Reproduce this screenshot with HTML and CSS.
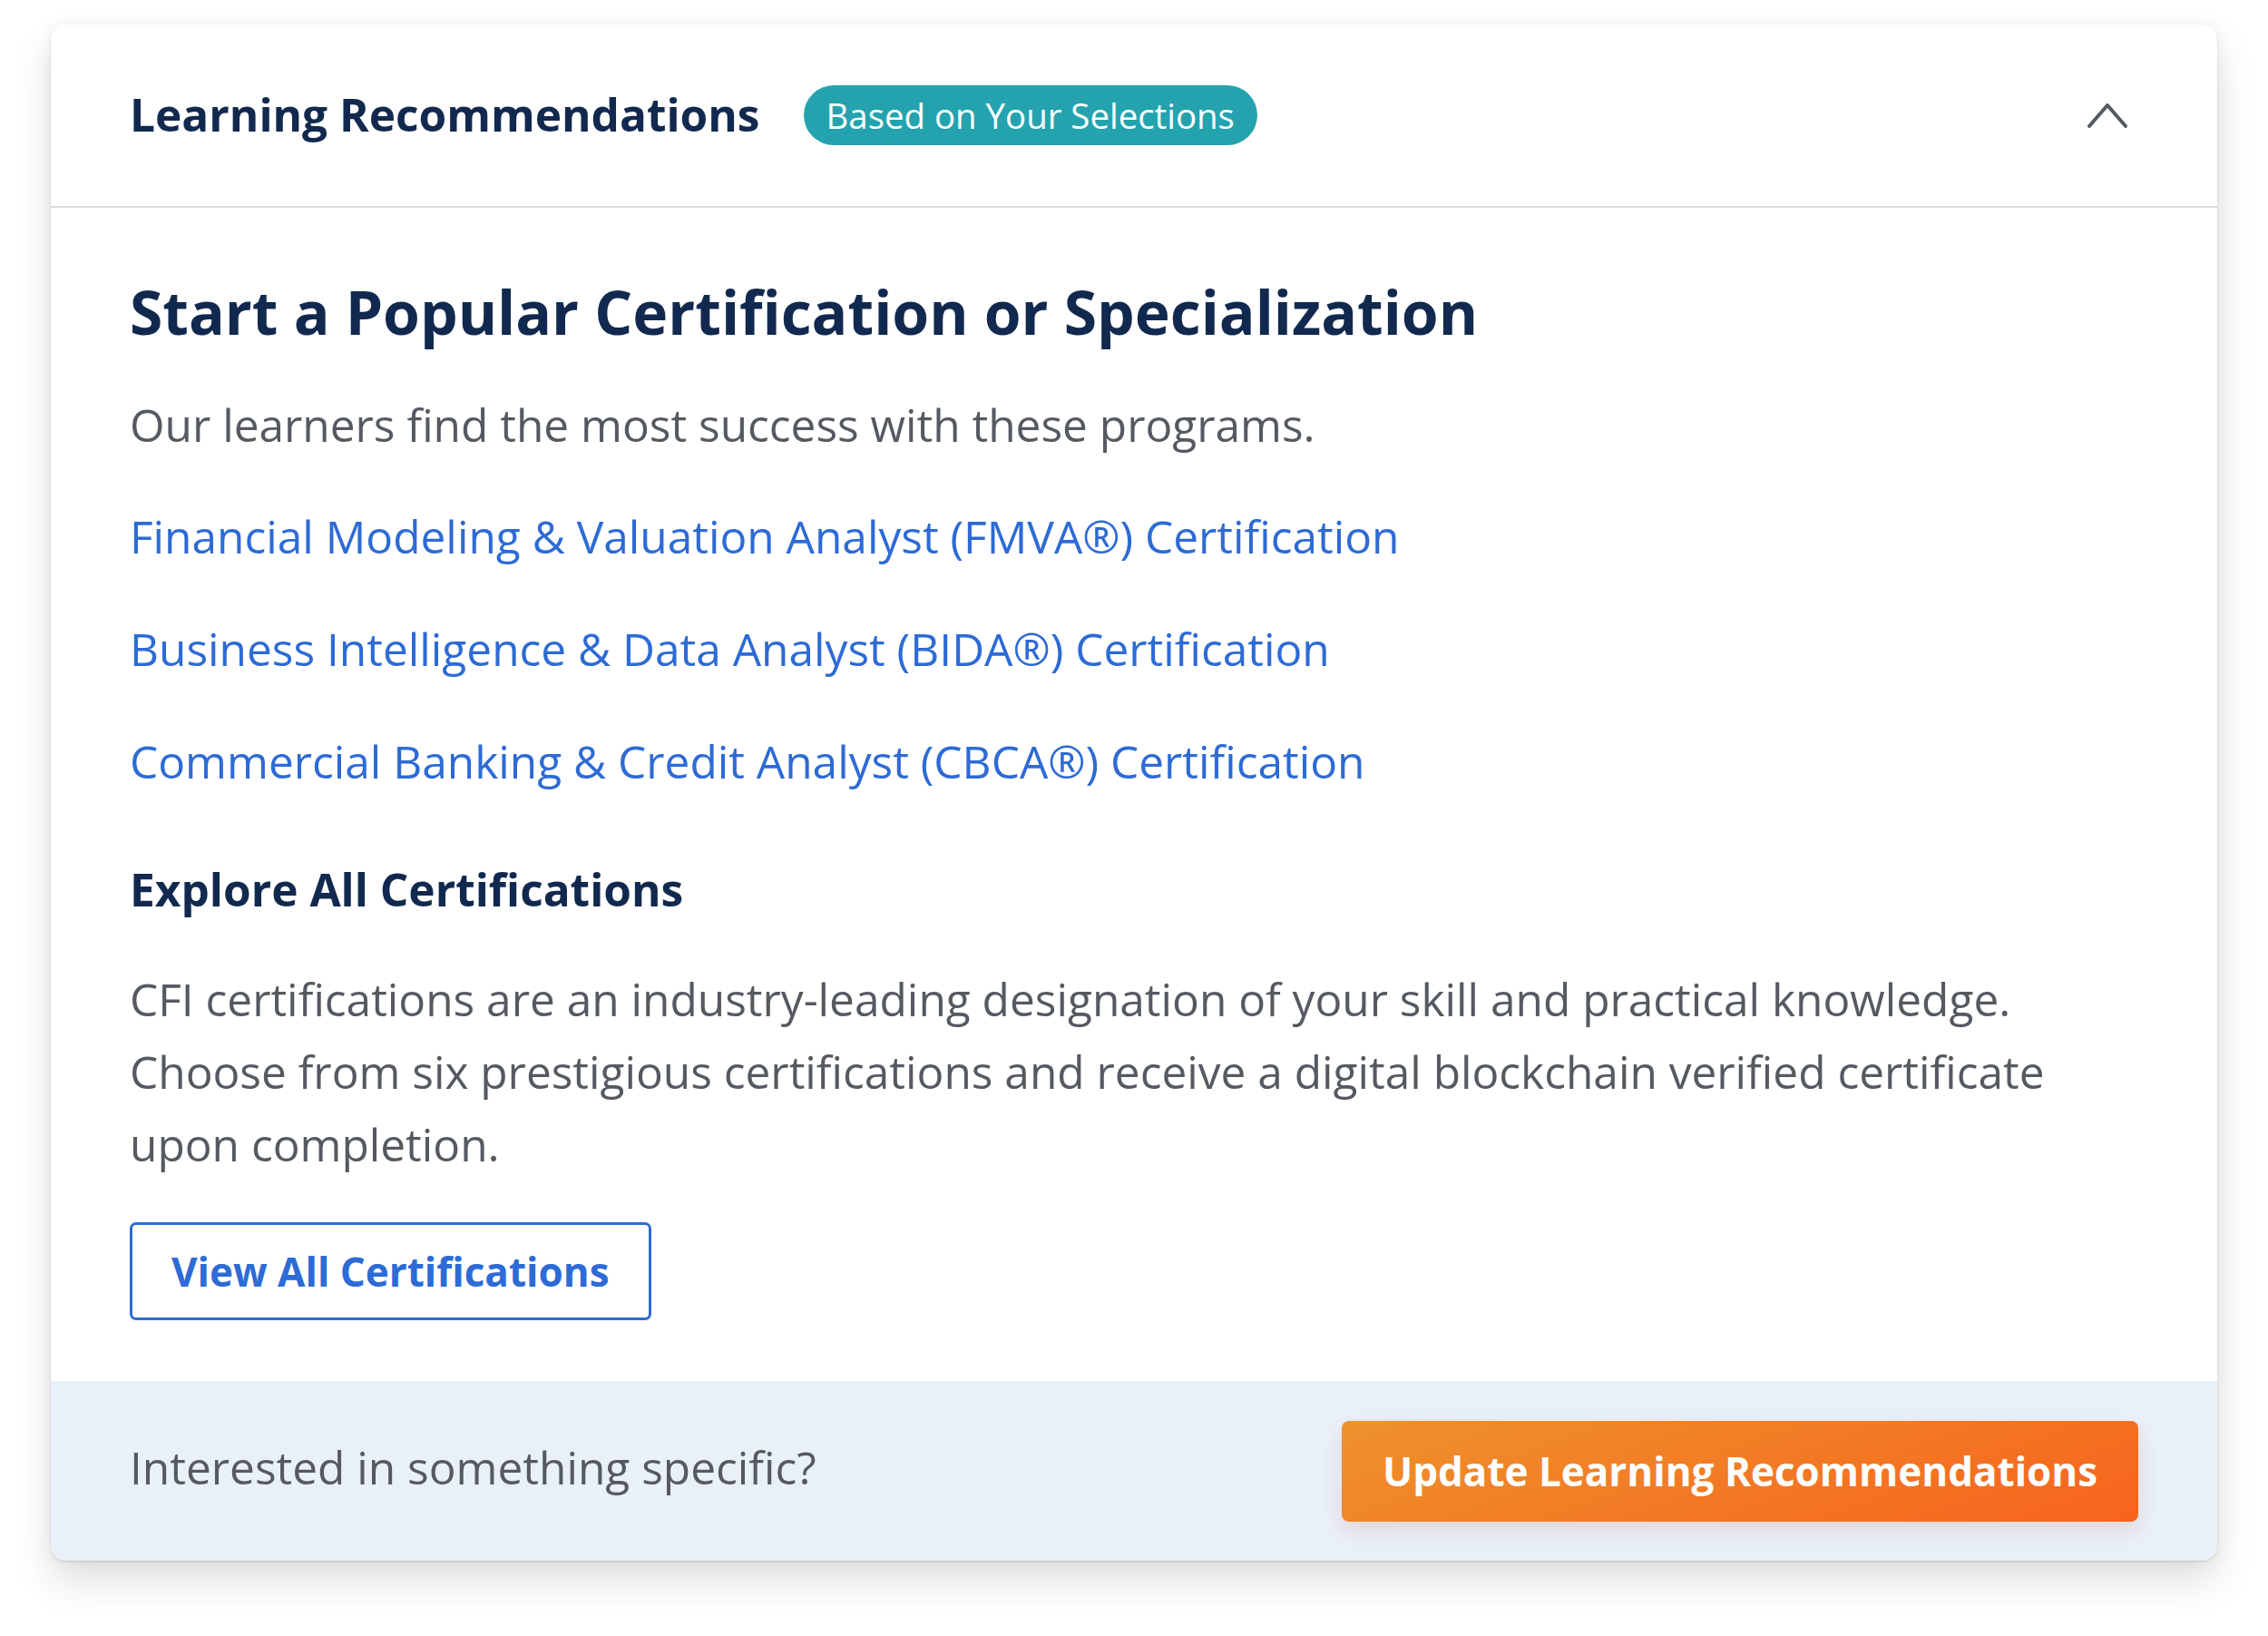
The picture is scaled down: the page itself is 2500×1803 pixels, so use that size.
FILE: index.html
```html
<!DOCTYPE html>
<html lang="en">
<head>
<meta charset="utf-8">
<title>Learning Recommendations</title>
<link rel="stylesheet" href="styles.css">
</head>
<body>
<section class="card">
  <header class="card-header">
    <h1 class="header-title">Learning Recommendations</h1>
    <span class="badge">Based on Your Selections</span>
    <button class="collapse" aria-label="Collapse">
      <svg width="52" height="34" viewBox="0 0 52 34"><polyline points="6,29 26,6 46,29" fill="none" stroke="#555a5f" stroke-width="4" stroke-linecap="round" stroke-linejoin="round"/></svg>
    </button>
  </header>
  <div class="card-body">
    <h2 class="section-title">Start a Popular Certification or Specialization</h2>
    <p class="intro">Our learners find the most success with these programs.</p>
    <ul class="links">
      <li><a href="#">Financial Modeling &amp; Valuation Analyst (FMVA®) Certification</a></li>
      <li><a href="#">Business Intelligence &amp; Data Analyst (BIDA®) Certification</a></li>
      <li><a href="#">Commercial Banking &amp; Credit Analyst (CBCA®) Certification</a></li>
    </ul>
    <h3 class="sub-title">Explore All Certifications</h3>
    <p class="desc">CFI certifications are an industry-leading designation of your skill and practical knowledge. Choose from six prestigious certifications and receive a digital blockchain verified certificate upon completion.</p>
    <a class="btn-outline" href="#">View All Certifications</a>
  </div>
  <footer class="card-footer">
    <span class="footer-text">Interested in something specific?</span>
    <a class="btn-orange" href="#">Update Learning Recommendations</a>
  </footer>
</section>
</body>
</html>
```
FILE: styles.css
```css
* { box-sizing: border-box; }
html, body { margin: 0; padding: 0; background: #ffffff; }
body {
  font-family: "Open Sans", "Noto Sans", sans-serif;
  padding: 27px 56px 120px 56px;
}
.card {
  width: 2388px;
  background: #ffffff;
  border-radius: 16px;
  box-shadow: 0 1px 2px rgba(0,0,0,0.16), 0 22px 44px rgba(0,0,0,0.13), 0 0 18px rgba(0,0,0,0.05);
  overflow: hidden;
}
.card-header {
  display: flex;
  align-items: center;
  height: 202px;
  padding: 0 87px;
  border-bottom: 2px solid #dadada;
}
.header-title {
  margin: 0;
  font-size: 49.6px;
  font-weight: 700;
  color: #12294f;
  line-height: 1;
}
.badge {
  margin-left: 48px;
  height: 66px;
  padding: 0 25px;
  display: inline-flex;
  align-items: center;
  border-radius: 33px;
  background: #24a3ae;
  color: #ffffff;
  font-size: 38.4px;
  font-weight: 400;
}
.collapse {
  margin-left: auto;
  margin-right: 8px;
  background: none;
  border: 0;
  padding: 0;
  display: flex;
}
.card-body {
  padding: 74px 87px 67px 87px;
}
.section-title {
  margin: 0;
  font-size: 66px;
  line-height: 80px;
  font-weight: 700;
  color: #12294f;
}
.intro {
  margin: 45px 0 0 0;
  font-size: 49.6px;
  line-height: 80px;
  color: #555a60;
}
.links {
  list-style: none;
  margin: 43px 0 0 0;
  padding: 0;
  display: flex;
  flex-direction: column;
  gap: 44px;
}
.links a {
  font-size: 49.6px;
  line-height: 80px;
  color: #2d6bd5;
  text-decoration: none;
  display: block;
}
.sub-title {
  margin: 61px 0 0 0;
  font-size: 49.6px;
  line-height: 80px;
  font-weight: 700;
  color: #12294f;
}
.desc {
  margin: 41px 0 0 0;
  font-size: 49.6px;
  line-height: 80px;
  color: #555a60;
  max-width: 2160px;
}
.btn-outline {
  margin-top: 46px;
  display: inline-flex;
  align-items: center;
  height: 108px;
  padding: 0 43px;
  border: 3px solid #2d6bd5;
  border-radius: 7px;
  color: #2d6bd5;
  font-size: 44px;
  font-weight: 700;
  text-decoration: none;
}
.card-footer {
  background: #e9f0fa;
  height: 198px;
  padding: 0 87px;
  display: flex;
  align-items: center;
  justify-content: space-between;
}
.footer-text {
  font-size: 49.6px;
  color: #555a60;
  margin-bottom: 8px;
}
.btn-orange {
  display: inline-flex;
  align-items: center;
  justify-content: center;
  width: 878px;
  height: 111px;
  border-radius: 8px;
  background: linear-gradient(160deg, #ee922c 0%, #f7631d 100%);
  color: #ffffff;
  font-size: 44px;
  font-weight: 700;
  text-decoration: none;
  box-shadow: 0 10px 22px rgba(190,80,40,0.16);
}
```
